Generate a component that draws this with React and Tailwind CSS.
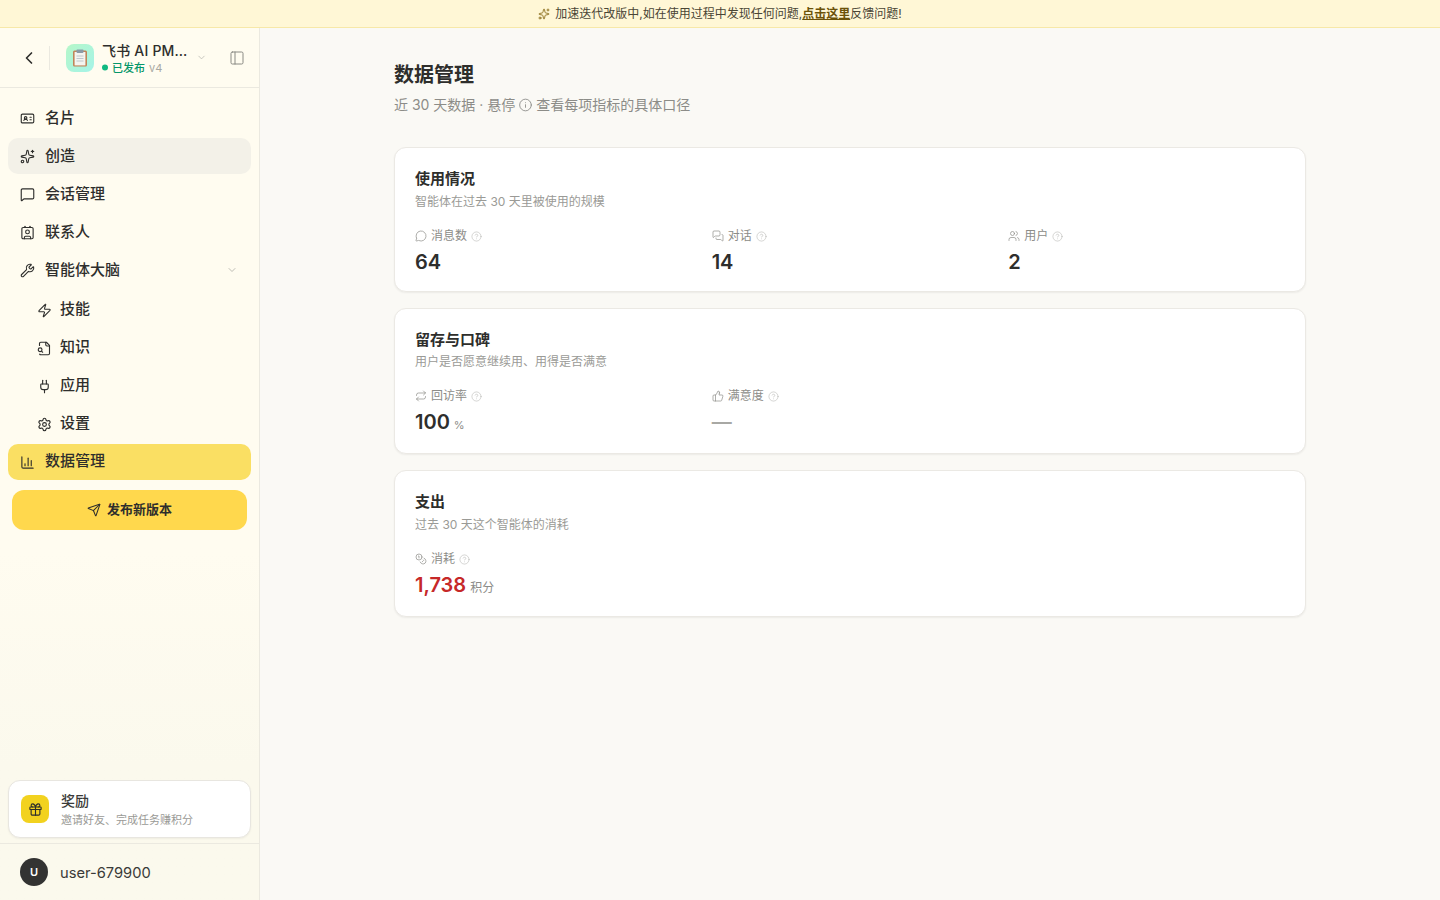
import React from "react";
import {
  ChevronLeft, ChevronDown, PanelLeft, IdCard, Sparkles, MessageSquare, Contact, Wrench, Zap, Plug, Settings,
  ChartColumn, Send, Gift, MessageCircle, MessagesSquare, Users, CircleHelp, Repeat, ThumbsUp, Coins,
} from "lucide-react";

const font = "font-['Inter','Noto_Sans_CJK_SC',sans-serif]";

function FileSearchOld({ size = 15, strokeWidth = 1.8, className = "" }) {
  return (
    <svg width={size} height={size} viewBox="0 0 24 24" fill="none" stroke="currentColor" strokeWidth={strokeWidth} strokeLinecap="round" strokeLinejoin="round" className={className} aria-hidden="true">
      <path d="M14 2v4a2 2 0 0 0 2 2h4" />
      <path d="M4.268 21a2 2 0 0 0 1.727 1H18a2 2 0 0 0 2-2V7l-5-5H6a2 2 0 0 0-2 2v3" />
      <path d="m9 18-1.5-1.5" />
      <circle cx="5" cy="14" r="3" />
    </svg>
  );
}

function NavItem({ icon: Icon, label, active, hover, sub, chevron }) {
  return (
    <div className={`flex h-9 items-center rounded-[10px] text-[15px] leading-5 font-medium text-[#2e2e2c] ${sub ? "pl-[29px] gap-[8px]" : "pl-3 gap-[10px]"} ${active ? "bg-[#fadf63]" : ""} ${hover ? "bg-[#f3f1e8]" : ""} ${chevron ? "pr-3" : ""}`}>
      <Icon size={15} strokeWidth={1.8} className="shrink-0" />
      <span className={`flex-1 ${sub || active ? "pb-[3px]" : "pb-[1px]"}`}>{label}</span>
      {chevron && <ChevronDown size={12} strokeWidth={1.5} className="mr-[1px] text-[#a8a8a2]" />}
    </div>
  );
}

function Metric({ icon: Icon, label, value, unit, tone, unitSize }) {
  return (
    <div>
      <div className="flex h-4 items-center text-[12px] leading-4 text-[#8c8c88]">
        <Icon size={12} strokeWidth={1.4} className="mr-1 shrink-0" />
        <span>{label}</span>
        <CircleHelp size={11} strokeWidth={1.1} className="ml-[4px] text-[#b0b0ac]" />
      </div>
      <div className="mt-[4px] flex h-7 items-baseline">
        {value === "—" ? (
          <span className="text-[20px] leading-7 font-semibold text-[#a8a8a4]">—</span>
        ) : (
          <span className={`text-[20px] leading-7 font-semibold ${tone || "text-[#2e2e2c]"}`}>{value}</span>
        )}
        {unit && <span className={`ml-[4px] text-[#8c8c88] ${unitSize || "text-[12px]"}`}>{unit}</span>}
      </div>
    </div>
  );
}

function Card({ title, desc, children, extra, descGap }) {
  return (
    <section className={`rounded-[12px] border border-[#ebe9e4] bg-white px-5 pt-[20.5px] shadow-[0_1px_2px_rgba(0,0,0,0.06)] ${extra}`}>
      <h2 className="text-[15px] leading-5 font-semibold text-[#2e2e2c]">{title}</h2>
      <p className={`${descGap || "mt-[5.5px]"} text-[12px] leading-4 text-[#9a9a96]`}>{desc}</p>
      <div className="mt-[18px] grid grid-cols-3 gap-x-5">{children}</div>
    </section>
  );
}

function ClipboardArt() {
  return (
    <svg width="16" height="18" viewBox="0 0 16 18" aria-hidden="true">
      <rect x="1" y="1.5" width="14" height="16" rx="1.5" fill="#c0855a" />
      <rect x="2.6" y="3" width="10.8" height="13.4" fill="#f4f4f0" />
      <rect x="4.5" y="0.5" width="7" height="3.4" rx="0.8" fill="#8a9aa6" />
      <path d="M4.5 7h7M4.5 9.5h7M4.5 12h7" stroke="#b9c2c8" strokeWidth="0.9" />
    </svg>
  );
}

export default function App() {
  return (
    <div className={`${font} flex h-[900px] w-full flex-col overflow-hidden bg-[#faf9f5] text-[#2e2e2c]`}>
      <div className="flex h-7 shrink-0 items-center justify-center gap-[5px] border-b border-[#f7e8a8] bg-[#fff7d6] text-[12px] leading-4 text-[#4a4535]">
        <Sparkles size={12} strokeWidth={1.8} className="text-[#8a6d1c]" />
        <span className="pt-[1px]">
          加速迭代改版中,如在使用过程中发现任何问题,
          <span className="font-semibold text-[#6b5208] underline">点击这里</span>
          反馈问题!
        </span>
      </div>
      <div className="flex min-h-0 flex-1">
        <aside className="flex w-[260px] shrink-0 flex-col border-r border-[#ebe9e0] bg-gradient-to-b from-[#fffcf0] from-60% to-[#fbf9ed] to-85%">
          <header className="flex h-[60px] shrink-0 items-center border-b border-[#ebe9e0] pl-[19px] pr-[14px]">
            <ChevronLeft size={20} strokeWidth={2} className="mr-[10px] shrink-0 text-[#2e2e2c]" />
            <div className="mr-4 h-6 w-px bg-[#ebe9e0]" />
            <div className="mr-2 flex h-7 w-7 shrink-0 items-center justify-center rounded-lg bg-gradient-to-br from-[#b6f7c8] to-[#a5f3e8]">
              <ClipboardArt />
            </div>
            <div className="w-[89px] min-w-0 -translate-y-[0.4px]">
              <div className="truncate text-[14px] leading-5 font-medium tracking-[0.2px] text-[#2e2e2c]">飞书 AI PM助手</div>
              <div className="flex items-center text-[11px] leading-[14px]">
                <span className="mr-[4px] h-[6px] w-[6px] rounded-full bg-[#10b981]" />
                <span className="font-medium text-[#059669]">已发布</span>
                <span className="ml-[4px] text-[#a8a8a2]">v4</span>
              </div>
            </div>
            <ChevronDown size={11} strokeWidth={1.5} className="ml-[5px] shrink-0 text-[#b0b0aa]" />
            <div className="flex-1" />
            <PanelLeft size={16} strokeWidth={1.5} className="shrink-0 text-[#8a8a84]" />
          </header>
          <nav className="flex flex-col gap-[2px] px-2 pt-3">
            <NavItem icon={IdCard} label="名片" />
            <NavItem icon={Sparkles} label="创造" hover />
            <NavItem icon={MessageSquare} label="会话管理" />
            <NavItem icon={Contact} label="联系人" />
            <NavItem icon={Wrench} label="智能体大脑" chevron />
            <div className="flex flex-col gap-[2px] pt-[2px]">
              <NavItem icon={Zap} label="技能" sub />
              <NavItem icon={FileSearchOld} label="知识" sub />
              <NavItem icon={Plug} label="应用" sub />
              <NavItem icon={Settings} label="设置" sub />
            </div>
            <NavItem icon={ChartColumn} label="数据管理" active />
          </nav>
          <div className="px-3 pt-[10px]">
            <button className="flex h-10 w-full items-center justify-center gap-[6px] rounded-xl bg-[#ffd84d] text-[13px] font-semibold text-[#2e2e2c]">
              <Send size={14} strokeWidth={1.8} />
              发布新版本
            </button>
          </div>
          <div className="flex-1" />
          <div className="mx-2 mb-[5px] flex h-[58px] items-center gap-3 rounded-xl border border-[#e8e6e0] bg-white pl-3 shadow-[0_1px_2px_rgba(0,0,0,0.05)]">
            <div className="flex h-7 w-7 shrink-0 items-center justify-center rounded-lg bg-[#f2d21f]">
              <Gift size={15} strokeWidth={1.8} className="text-[#2e2e2c]" />
            </div>
            <div>
              <div className="text-[14px] leading-5 font-medium text-[#3a3a38]">奖励</div>
              <div className="mt-[1px] text-[11px] leading-4 text-[#9a9a96]">邀请好友、完成任务赚积分</div>
            </div>
          </div>
          <div className="flex h-[57px] shrink-0 items-center gap-3 border-t border-[#ebe9e0] pl-5">
            <div className="flex h-7 w-7 items-center justify-center rounded-full bg-[#333332] text-[11px] font-semibold text-white">U</div>
            <span className="pt-[2px] text-[14.7px] text-[#3a3a38]">user-679900</span>
          </div>
        </aside>
        <main className="min-w-0 flex-1 px-[134px] pt-[33px]">
          <h1 className="text-[20px] leading-7 font-semibold text-[#2e2e2c]">数据管理</h1>
          <p className="mt-[6px] flex items-center text-[14px] leading-5 text-[#8c8c88]">
            近 30 天数据 · 悬停
            <svg width="14" height="14" viewBox="0 0 24 24" fill="none" stroke="currentColor" strokeWidth="1.5" strokeLinecap="round" className="mx-[3.5px] -translate-x-[0.5px]" aria-hidden="true">
              <circle cx="12" cy="12" r="10" />
              <path d="M12 16v-4.5M12 8h.01" />
            </svg>
            查看每项指标的具体口径
          </p>
          <div className="mt-[32px] flex flex-col gap-4">
            <Card title="使用情况" desc="智能体在过去 30 天里被使用的规模" extra="h-[145px]">
              <Metric icon={MessageCircle} label="消息数" value="64" />
              <Metric icon={MessagesSquare} label="对话" value="14" />
              <Metric icon={Users} label="用户" value="2" />
            </Card>
            <Card title="留存与口碑" desc="用户是否愿意继续用、用得是否满意" extra="h-[146px]" descGap="mt-[4.5px]">
              <Metric icon={Repeat} label="回访率" value="100" unit="%" unitSize="text-[11px]" />
              <Metric icon={ThumbsUp} label="满意度" value="—" />
            </Card>
            <Card title="支出" desc="过去 30 天这个智能体的消耗" extra="h-[147px]">
              <Metric icon={Coins} label="消耗" value="1,738" unit="积分" tone="text-[#c62828]" />
            </Card>
          </div>
        </main>
      </div>
    </div>
  );
}
